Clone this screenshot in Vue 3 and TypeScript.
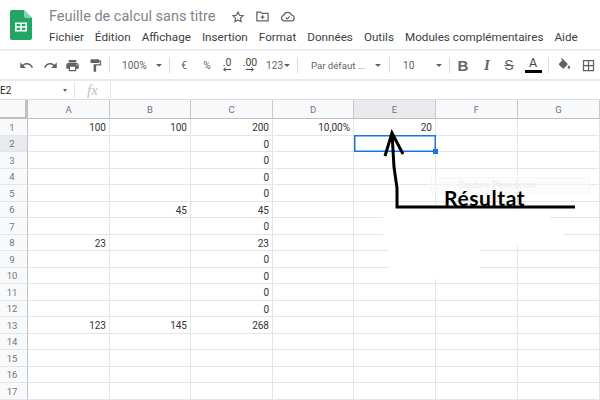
<template>
  <div class="sheet-app">
    <header class="top">
      <svg class="logo" viewBox="0 0 22 30" width="22" height="30">
        <path d="M2 0h12l8 8v20a2 2 0 0 1-2 2H2a2 2 0 0 1-2-2V2a2 2 0 0 1 2-2z" fill="#23a566" />
        <path d="M14 0l8 8h-6a2 2 0 0 1-2-2z" fill="#8ed1b1" />
        <path d="M5 12.500h12v9H5z M6.600 14v2.200h3.600V14z M11.800 14v2.200h3.600V14z M6.600 17.800V20h3.600v-2.200z M11.800 17.800V20h3.600v-2.200z" fill="#fff" fill-rule="evenodd" />
      </svg>
      <div class="top-main">
        <div class="title-row">
          <span class="title">Feuille de calcul sans titre</span>
          <svg class="title-ico" viewBox="0 0 24 24" width="14" height="14">
            <path d="M12 3.500l2.600 5.600 6.100.7-4.500 4.200 1.200 6L12 17l-5.400 3 1.200-6-4.500-4.200 6.100-.7z" fill="none" stroke="#5f6368" stroke-width="2" />
          </svg>
          <svg class="title-ico" viewBox="0 0 24 24" width="15" height="15">
            <path d="M3 5h6l2 2h10v12H3z" fill="none" stroke="#5f6368" stroke-width="2" />
            <path d="M12 10v6M9 13h6" stroke="#5f6368" stroke-width="2" />
          </svg>
          <svg class="title-ico" viewBox="0 0 24 24" width="15" height="15">
            <path d="M7 19a4.500 4.500 0 0 1-1-8.900A6.500 6.500 0 0 1 18.500 10 4.500 4.500 0 0 1 18 19z" fill="none" stroke="#5f6368" stroke-width="2" />
            <path d="M9 13.500l2.500 2.500 4-4" fill="none" stroke="#5f6368" stroke-width="1.800" />
          </svg>
        </div>
        <nav class="menu">
          <span v-for="m in menus" :key="m">{{ m }}</span>
        </nav>
      </div>
    </header>

    <div class="toolbar">
      <span class="slot s-undo"><svg class="ico" viewBox="0 0 24 24"><path d="M12.500 8c-2.650 0-5.050 1-6.900 2.600L2 7v9h9l-3.620-3.620c1.390-1.160 3.160-1.880 5.120-1.880 3.540 0 6.550 2.310 7.600 5.500l2.370-.780C21.080 11.030 17.150 8 12.500 8z" fill="#5f6368" /></svg></span>
      <span class="slot s-undo"><svg class="ico" viewBox="0 0 24 24"><path d="M18.400 10.600C16.550 9 14.150 8 11.500 8c-4.650 0-8.580 3.030-9.960 7.220l2.360.780c1.050-3.190 4.050-5.500 7.600-5.500 1.950 0 3.730.72 5.120 1.880L13 16h9V7z" fill="#5f6368" /></svg></span>
      <span class="slot s-print"><svg class="ico" viewBox="0 0 24 24"><path d="M19 8H5c-1.660 0-3 1.340-3 3v6h4v4h12v-4h4v-6c0-1.660-1.340-3-3-3zm-3 11H8v-5h8zm3-7a1 1 0 1 1 0-2 1 1 0 0 1 0 2zM18 3H6v4h12z" fill="#5f6368" /></svg></span>
      <span class="slot s-undo"><svg class="ico" viewBox="0 0 24 24"><path d="M18 4V3c0-.550-.450-1-1-1H5c-.550 0-1 .450-1 1v4c0 .550.450 1 1 1h12c.550 0 1-.450 1-1V6h1v4H9v11c0 .550.450 1 1 1h2c.550 0 1-.450 1-1v-9h8V4z" fill="#5f6368" /></svg></span>
      <i class="sep sep-a"></i>
      <span class="txt zoom-val">100%</span><i class="caret zoom-caret"></i>
      <i class="sep sep-b"></i>
      <span class="slot s-euro">€</span>
      <span class="slot s-pct">%</span>
      <span class="slot dec s-less">.0<svg viewBox="0 0 12 6" width="10" height="5"><path d="M11 3H2M4.500.8L2 3l2.500 2.200" fill="none" stroke="#444" stroke-width="1.200" /></svg></span>
      <span class="slot dec s-more">.00<svg viewBox="0 0 12 6" width="10" height="5"><path d="M1 3h9M7.500.8L10 3 7.500 5.200" fill="none" stroke="#444" stroke-width="1.200" /></svg></span>
      <span class="txt fmt">123</span><i class="caret fmt-caret"></i>
      <i class="sep sep-b"></i>
      <span class="txt font-name">Par défaut ...</span><i class="caret font-caret"></i>
      <i class="sep sep-c"></i>
      <span class="txt font-size">10</span><i class="caret size-caret"></i>
      <i class="sep sep-b"></i>
      <b class="slot glyph s-bold">B</b>
      <i class="slot glyph s-ital">I</i>
      <s class="slot glyph s-strike">S</s>
      <span class="slot color-a">A<i></i></span>
      <i class="sep sep-a"></i>
      <span class="slot s-fill"><svg class="ico" viewBox="0 0 24 24"><path d="M16.560 8.940L7.620 0 6.210 1.410l2.380 2.380-5.150 5.150c-.590.590-.590 1.540 0 2.120l5.500 5.500c.290.290.680.440 1.060.440s.770-.150 1.060-.440l5.500-5.500c.590-.580.590-1.530 0-2.120zM19 11.500s-2 2.170-2 3.500a2 2 0 0 0 4 0c0-1.330-2-3.500-2-3.500z" fill="#5f6368" /></svg></span>
      <span class="slot s-border"><svg class="ico" viewBox="0 0 24 24"><path d="M3 3v18h18V3zm8 16H5v-6h6zm0-8H5V5h6zm8 8h-6v-6h6zm0-8h-6V5h6z" fill="#5f6368" /></svg></span>
    </div>

    <div class="formula">
      <span class="cell-ref">E2</span><i class="caret ref-caret"></i>
      <i class="fx-sep"></i>
      <span class="fx">fx</span>
      <i class="fx-sep"></i>
    </div>

    <div class="grid">
      <div class="corner"></div>
      <div v-for="c in cols" :key="c" class="col-head" :class="{ on: c === 'E' }">{{ c }}</div>
      <template v-for="r in rows" :key="r.n">
        <div class="row-head" :class="{ on: r.n === 2 }">{{ r.n }}</div>
        <div v-for="(v, i) in r.cells" :key="i" class="cell">{{ v }}</div>
      </template>

      <div class="selection"><i></i></div>
    </div>

    <!-- zones effacées sur la capture -->
    <div class="wipe wipe-a"></div>
    <div class="wipe wipe-b"></div>
    <div class="wipe wipe-c"></div>
    <div class="ghost"><span>Capture Plein écran</span></div>

    <svg class="arrow" viewBox="0 0 600 400" width="600" height="400">
      <path d="M385 156L392 133L403 154M392 133L394 167L397 188V207H575" fill="none" stroke="#000" stroke-width="3" />
    </svg>
    <span class="result">Résultat</span>
  </div>
</template>

<script setup lang="ts">
const menus = [
  "Fichier",
  "Édition",
  "Affichage",
  "Insertion",
  "Format",
  "Données",
  "Outils",
  "Modules complémentaires",
  "Aide",
];
const cols = ["A", "B", "C", "D", "E", "F", "G"];

const filled: Record<number, string[]> = {
  1: ["100", "100", "200", "10,00%", "20", "", ""],
  2: ["", "", "0", "", "", "", ""],
  3: ["", "", "0", "", "", "", ""],
  4: ["", "", "0", "", "", "", ""],
  5: ["", "", "0", "", "", "", ""],
  6: ["", "45", "45", "", "", "", ""],
  7: ["", "", "0", "", "", "", ""],
  8: ["23", "", "23", "", "", "", ""],
  9: ["", "", "0", "", "", "", ""],
  10: ["", "", "0", "", "", "", ""],
  11: ["", "", "0", "", "", "", ""],
  12: ["", "", "0", "", "", "", ""],
  13: ["123", "145", "268", "", "", "", ""],
};

const rows = Array.from({ length: 17 }, (_, i) => ({
  n: i + 1,
  cells: filled[i + 1] ?? ["", "", "", "", "", "", ""],
}));
</script>

<style>
html,
body {
  margin: 0;
  background: #fff;
  overflow: hidden;
}
</style>

<style scoped>
.sheet-app {
  position: relative;
  width: 600px;
  height: 400px;
  overflow: hidden;
  background: #fff;
  font-family: Roboto, "Liberation Sans", sans-serif;
  color: #3c4043;
}

/* en-tete */
.top {
  display: flex;
  height: 51px;
  box-sizing: border-box;
  padding: 10px 0 0 10px;
  border-bottom: 2px solid #eceef0;
}
.logo {
  flex: none;
  margin-right: 17px;
}
.top-main {
  display: flex;
  flex-direction: column;
}
.title-row {
  display: flex;
  align-items: center;
  height: 15px;
  margin-top: -1px;
}
.title {
  font-size: 14.500px;
  color: #80868b;
  margin-right: 15px;
  white-space: nowrap;
}
.title-ico {
  margin-right: 10px;
}
.menu {
  display: flex;
  gap: 11px;
  margin-top: 6px;
  font-size: 11.700px;
  color: #3c4043;
  white-space: nowrap;
}

/* barre d'outils */
.toolbar {
  display: flex;
  align-items: center;
  height: 30px;
  padding-left: 14px;
  border-bottom: 2px solid #e8eaed;
  box-sizing: border-box;
  font-size: 10.200px;
  color: #5f6368;
  white-space: nowrap;
}
.slot {
  flex: none;
  display: flex;
  align-items: center;
  justify-content: center;
}
.ico {
  width: 15px;
  height: 15px;
}
.s-undo {
  width: 24px;
}
.s-print {
  width: 21px;
}
.s-euro {
  width: 28px;
}
.s-pct {
  width: 18px;
}
.s-less {
  width: 22px;
}
.s-more {
  width: 24px;
}
.s-bold {
  width: 26px;
}
.s-ital,
.s-strike {
  width: 22px;
}
.s-fill {
  width: 30px;
}
.s-border {
  width: 18px;
}
.sep {
  flex: none;
  width: 1px;
  height: 16px;
  background: #dadce0;
}
.sep-a {
  margin-left: 2px;
}
.sep-b {
  margin-left: 7px;
}
.sep-c {
  margin-left: 8px;
}
.txt {
  flex: none;
}
.caret {
  flex: none;
  width: 0;
  height: 0;
  border-left: 3px solid transparent;
  border-right: 3px solid transparent;
  border-top: 3px solid #5f6368;
}
.zoom-val {
  width: 30px;
  margin-left: 12px;
}
.zoom-caret {
  margin-left: 4px;
}
.dec {
  flex-direction: column;
  font-size: 10.500px;
  line-height: 10px;
  color: #444;
}
.dec svg {
  margin-top: -1px;
}
.fmt {
  width: 17px;
  margin-left: 4px;
}
.fmt-caret {
  margin-left: 1px;
}
.font-name {
  width: 54px;
  margin-left: 13px;
  font-size: 9.600px;
}
.font-caret {
  margin-left: 10px;
}
.font-size {
  width: 12px;
  margin-left: 13px;
}
.size-caret {
  margin-left: 21px;
}
.glyph {
  font-size: 14px;
  color: #5f6368;
  font-family: "Liberation Sans", sans-serif;
  font-style: normal;
}
.s-bold {
  font-weight: 700;
  font-size: 15px;
}
.s-ital {
  font-family: "Liberation Serif", serif;
  font-style: italic;
  font-weight: 700;
  font-size: 15px;
}
.color-a {
  flex-direction: column;
  width: 26px;
  font-size: 12.500px;
  line-height: 12px;
  color: #444;
}
.color-a i {
  display: block;
  width: 17px;
  height: 3px;
  background: #000;
  margin-top: 1px;
}

/* barre de formule */
.formula {
  display: flex;
  align-items: center;
  height: 19px;
  box-sizing: border-box;
  border-bottom: 1px solid #dadce0;
  font-size: 10px;
}
.cell-ref {
  width: 63px;
  color: #222;
}
.ref-caret {
  border-left-width: 2.500px;
  border-right-width: 2.500px;
  margin-right: 7px;
}
.fx-sep {
  width: 1px;
  height: 16px;
  background: #e3e4e6;
}
.fx {
  width: 35px;
  text-align: center;
  font-family: "Liberation Serif", serif;
  font-style: italic;
  font-size: 15px;
  color: #bdc1c6;
}

/* grille */
.grid {
  position: relative;
  display: grid;
  grid-template-columns: 28px 82px 81px 82px 81px 82px 82px 82px;
  grid-template-rows: 19px repeat(17, 16.500px);
  font-size: 10px;
}
.corner {
  box-sizing: border-box;
  background: #f8f9fa;
  border-right: 3px solid #c0c0c0;
  border-bottom: 2px solid #c0c0c0;
}
.col-head {
  display: flex;
  align-items: center;
  justify-content: center;
  box-sizing: border-box;
  padding-top: 1px;
  background: #f8f9fa;
  border-right: 1px solid #c8c9cb;
  border-bottom: 1px solid #bfc0c2;
  color: #70757a;
  font-size: 9.500px;
}
.row-head {
  display: flex;
  align-items: center;
  justify-content: center;
  box-sizing: border-box;
  padding: 1px 3px 0 0;
  background: #f8f9fa;
  border-right: 1px solid #c0c0c0;
  border-bottom: 1px solid #e4e5e5;
  color: #70757a;
  font-size: 9.500px;
}
.col-head.on,
.row-head.on {
  background: #e8eaed;
}
.cell {
  display: flex;
  align-items: center;
  justify-content: flex-end;
  box-sizing: border-box;
  padding: 2px 3px 0 0;
  border-right: 1px solid #e4e5e5;
  border-bottom: 1px solid #e4e5e5;
  color: #333;
}

/* ces elements sont au-dessus de la grille */
.selection {
  position: absolute;
  left: 354px;
  top: 35px;
  width: 82px;
  height: 17px;
  box-sizing: border-box;
  border: 1px solid #1a73e8;
  box-shadow: inset 0 0 0 0.500px #1a73e8;
}
.selection i {
  position: absolute;
  right: -3px;
  bottom: -3px;
  width: 5px;
  height: 5px;
  background: #1a73e8;
}
.wipe {
  position: absolute;
  background: #fff;
}
.wipe-a {
  left: 383px;
  top: 209px;
  width: 167px;
  height: 26px;
}
.wipe-b {
  left: 383px;
  top: 234px;
  width: 180px;
  height: 11px;
}
.wipe-c {
  left: 389px;
  top: 244px;
  width: 91px;
  height: 35px;
}
.ghost {
  position: absolute;
  left: 431px;
  top: 177px;
  width: 159px;
  height: 17px;
  box-sizing: border-box;
  padding-left: 26px;
  background: rgba(248, 249, 250, 0.6);
  border: 1px solid #f5f6f7;
  font-size: 9px;
  line-height: 15px;
  color: #e9ebed;
}
.arrow {
  position: absolute;
  left: 0;
  top: 0;
}
.result {
  position: absolute;
  left: 444px;
  top: 185px;
  font-family: Lato, sans-serif;
  font-weight: 700;
  font-size: 21px;
  letter-spacing: 0.6px;
  line-height: 25px;
  color: #000;
}
</style>
